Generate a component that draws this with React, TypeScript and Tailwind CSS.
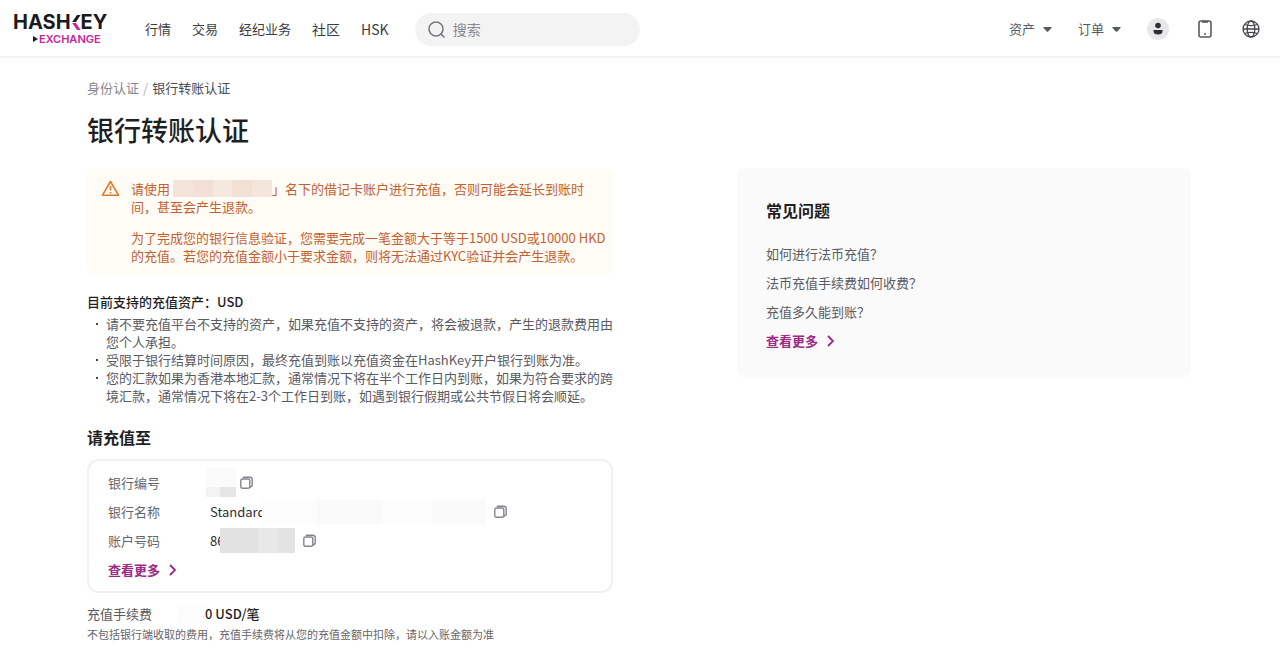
// App.tsx
import type { ReactNode } from "react";

const navLinks = [
  { label: "行情", large: false },
  { label: "交易", large: false },
  { label: "经纪业务", large: false },
  { label: "社区", large: true },
  { label: "HSK", large: true },
];

const questions = ["如何进行法币充值？", "法币充值手续费如何收费？", "充值多久能到账？"];

const notes = [
  "请不要充值平台不支持的资产，如果充值不支持的资产，将会被退款，产生的退款费用由您个人承担。",
  "受限于银行结算时间原因，最终充值到账以充值资金在HashKey开户银行到账为准。",
  "您的汇款如果为香港本地汇款，通常情况下将在半个工作日内到账，如果为符合要求的跨境汇款，通常情况下将在2-3个工作日到账，如遇到银行假期或公共节假日将会顺延。",
];

function Logo() {
  return (
    <a href="#" aria-label="HashKey Exchange" className="flex w-[95px] shrink-0 flex-col font-['Inter',sans-serif]">
      <span className="flex h-5 items-center text-xl leading-5 font-bold text-[#1b1b1f]">
        HASH
        <svg width="10" height="15" viewBox="0 0 10 15" aria-hidden="true" className="shrink-0">
          <path d="M6 0H9.6L5 7H1.2Z" fill="#1b1b1f" />
          <path d="M1.2 8H5L9.6 15H6Z" fill="#c8249b" />
        </svg>
        EY
      </span>
      <span className="flex h-[14px] items-center gap-px pl-5 text-[11px] leading-[14px] font-semibold text-[#c8249b]">
        <svg width="5" height="6" viewBox="0 0 5 6" aria-hidden="true" className="shrink-0">
          <path d="M0 0L5 3L0 6Z" fill="#1b1b1f" />
        </svg>
        EXCHANGE
      </span>
    </a>
  );
}

function MenuButton({ label }: { label: string }) {
  return (
    <button type="button" className="flex items-center gap-2 text-[13px] text-[#5a5a62]">
      {label}
      <svg width="9" height="5" viewBox="0 0 9 5" aria-hidden="true">
        <path d="M0.8 0H8.2Q9 0.2 8.5 0.9L5.2 4.6Q4.5 5.2 3.8 4.6L0.5 0.9Q0 0.2 0.8 0Z" fill="#5a5a62" />
      </svg>
    </button>
  );
}

function Header() {
  return (
    <header className="flex h-[58px] items-center border-b-2 border-[#f3f3f3] pt-0.5 pr-[19px] pl-[13px]">
      <Logo />
      <nav className="ml-[37px] flex shrink-0 items-center gap-[21px] text-[#3c3c43]">
        {navLinks.map((link) => (
          <a key={link.label} href="#" className={link.large ? "text-sm" : "text-[13px]"}>
            {link.label}
          </a>
        ))}
      </nav>
      <label className="ml-[26px] flex h-[33px] w-[225px] items-center gap-2 rounded-full bg-[#f3f3f3] px-[13px]">
        <svg width="17" height="17" viewBox="0 0 17 17" fill="none" stroke="#77777f" strokeWidth="1.6" aria-hidden="true" className="shrink-0">
          <circle cx="8" cy="8" r="7" />
          <path d="M13 13L16 16" strokeLinecap="round" />
        </svg>
        <input
          type="search"
          aria-label="搜索"
          placeholder="搜索"
          className="w-full min-w-0 bg-transparent text-sm outline-none placeholder:text-[#88888f]"
        />
      </label>
      <div className="ml-auto flex shrink-0 items-center gap-[26px]">
        <MenuButton label="资产" />
        <MenuButton label="订单" />
        <button type="button" aria-label="账户">
          <svg width="22" height="22" viewBox="0 0 22 22" className="block">
            <circle cx="11" cy="11" r="11" fill="#e8e8ea" />
            <circle cx="11" cy="7.5" r="2.8" fill="#2e2e33" />
            <path d="M6.5 12H15.5V13Q15.5 16.5 11 16.5Q6.5 16.5 6.5 13Z" fill="#2e2e33" />
          </svg>
        </button>
        <button type="button" aria-label="下载应用">
          <svg width="20" height="20" viewBox="0 0 20 20" fill="none" stroke="#5a5a62" strokeWidth="1.6" className="block">
            <rect x="4" y="2" width="12" height="16" rx="2" />
            <path d="M7 2.8H13" strokeWidth="2" />
            <circle cx="10" cy="15" r="1" fill="#5a5a62" stroke="none" />
          </svg>
        </button>
        <button type="button" aria-label="语言">
          <svg width="20" height="20" viewBox="0 0 20 20" fill="none" stroke="#45454c" strokeWidth="1.3" className="block">
            <circle cx="10" cy="10" r="8" />
            <ellipse cx="10" cy="10" rx="3.8" ry="8" />
            <path d="M2 10H18M3.6 5.5Q10 7.6 16.4 5.5M3.6 14.5Q10 12.4 16.4 14.5" />
          </svg>
        </button>
      </div>
    </header>
  );
}

function MoreLink() {
  return (
    <a href="#" className="flex h-[29px] items-center gap-2 text-[13px] font-bold text-[#9c2a86]">
      查看更多
      <svg width="9" height="12" viewBox="0 0 9 12" fill="none" stroke="#9c2a86" strokeWidth="1.8" aria-hidden="true">
        <path d="M2 1L7 6L2 11" />
      </svg>
    </a>
  );
}

function CopyButton({ label }: { label: string }) {
  return (
    <button type="button" aria-label={label} className="shrink-0">
      <svg width="13" height="13" viewBox="0 0 13 13" fill="none" stroke="#85858d" strokeWidth="1.4" className="block">
        <rect x="0.8" y="3" width="9" height="9.2" rx="1.6" />
        <path d="M2.8 1.2H9.8Q12.2 1.2 12.2 3.4V9.6L10 11.4" />
      </svg>
    </button>
  );
}

function BankRow({ label, children }: { label: string; children: ReactNode }) {
  return (
    <div className="flex h-[29px] items-center">
      <dt className="w-[98px] shrink-0 text-[#66666e]">{label}</dt>
      <dd className="flex min-w-0 items-center text-[#2e2e33]">{children}</dd>
    </div>
  );
}

function Warning() {
  return (
    <section className="flex gap-[11px] rounded-lg bg-[#fffcf5] pt-3 pb-[10px] pl-[14px] text-[13px] leading-[18px] text-[#c4602f]">
      <svg width="19" height="18" viewBox="0 0 19 18" fill="none" stroke="#e0792b" strokeWidth="1.6" aria-hidden="true" className="shrink-0">
        <path d="M9.5 1.5L17.5 15.2H1.5Z" strokeLinejoin="round" />
        <path d="M9.5 6V10.5M9.5 12V13.6" />
      </svg>
      <div className="flex flex-col gap-[13px]">
        <p>
          请使用{" "}
          <span className="inline-flex h-[17px] w-[99px] overflow-hidden align-top">
            <span className="grow bg-[#f4e4da]" />
            <span className="grow bg-[#f2dfd5]" />
            <span className="grow bg-[#f5e8df]" />
            <span className="grow bg-[#f2e0d5]" />
            <span className="grow bg-[#f4e6dc]" />
          </span>
          」名下的借记卡账户进行充值，否则可能会延长到账时
          <br />
          间，甚至会产生退款。
        </p>
        <p>
          为了完成您的银行信息验证，您需要完成一笔金额大于等于1500 USD或10000 HKD
          <br />
          的充值。若您的充值金额小于要求金额，则将无法通过KYC验证并会产生退款。
        </p>
      </div>
    </section>
  );
}

function BankCard() {
  return (
    <div className="mt-[10px] rounded-xl border-2 border-[#f1f1f2] px-[19px] py-[7px] text-[13px] leading-[18px]">
      <dl>
        <BankRow label="银行编号">
          <span className="mr-1 flex h-[29px] w-[30px] flex-col">
            <span className="grow bg-[#fbfbfb]" />
            <span className="flex h-[10px]">
              <span className="w-[14px] bg-[#f3f3f3]" />
              <span className="grow bg-[#e6e6e7]" />
            </span>
          </span>
          <CopyButton label="复制银行编号" />
        </BankRow>
        <BankRow label="银行名称">
          <span className="ml-1">Standard</span>
          {/* masked remainder sits over the last letter */}
          <span className="relative mr-2 -ml-1 flex h-6 w-[224px]">
            <span className="w-14 bg-[#fcfcfc]" />
            <span className="w-16 bg-[#f9f9f9]" />
            <span className="w-[50px] bg-[#fcfcfc]" />
            <span className="grow bg-[#fafafa]" />
          </span>
          <CopyButton label="复制银行名称" />
        </BankRow>
        <BankRow label="账户号码">
          <span className="ml-1">86</span>
          <span className="relative mr-2 -ml-1 flex h-[25px] w-[75px]">
            <span className="w-[38px] bg-[#e2e2e3]" />
            <span className="w-5 bg-[#e8e8e8]" />
            <span className="grow bg-[#e3e3e3]" />
          </span>
          <CopyButton label="复制账户号码" />
        </BankRow>
      </dl>
      <MoreLink />
    </div>
  );
}

export default function App() {
  return (
    <div className="bg-white font-['Noto_Sans_CJK_SC',sans-serif] text-[#1f1f23]">
      <Header />
      <main className="pt-[21px] pr-[89px] pb-6 pl-[87px]">
        <nav aria-label="面包屑" className="flex gap-1 text-[13px] leading-[18px]">
          <a href="#" className="text-[#85858d]">身份认证</a>
          <span className="text-[#b5b5bb]">/</span>
          <span className="text-[#4c4c54]">银行转账认证</span>
        </nav>
        <h1 className="mt-[15px] text-[27px] leading-9 font-medium">银行转账认证</h1>

        <div className="mt-5 grid grid-cols-[526fr_454fr] items-start gap-[124px]">
          <div>
            <Warning />
            <h2 className="mt-[18px] text-[13px] leading-[18px] font-medium">目前支持的充值资产：USD</h2>
            <ul className="mt-1 text-[13px] leading-[18px] text-[#5a5a62]">
              {notes.map((note) => (
                <li key={note} className="flex">
                  <span className="flex w-[19px] shrink-0 justify-center pt-2">
                    <span className="size-[2px] bg-[#45454c]" />
                  </span>
                  <span>{note}</span>
                </li>
              ))}
            </ul>

            <h2 className="mt-5 text-base leading-6 font-bold">请充值至</h2>
            <BankCard />
            <div className="mt-3 flex text-[13px] leading-[18px]">
              <span className="w-[90px] text-[#5a5a62]">充值手续费</span>
              <span className="w-7 bg-[#fcfcfc]" />
              <span className="font-medium">0 USD/笔</span>
            </div>
            <p className="mt-0.5 text-[11px] leading-[18px] text-[#66666e]">
              不包括银行端收取的费用，充值手续费将从您的充值金额中扣除，请以入账金额为准
            </p>
          </div>

          <aside className="rounded-lg bg-[#fafafa] px-[29px] pt-[30px] pb-[22px]">
            <h2 className="text-base leading-6 font-bold">常见问题</h2>
            <ul className="mt-[17px] text-[13px] text-[#5a5a62]">
              {questions.map((question) => (
                <li key={question}>
                  <a href="#" className="flex h-[29px] items-center">{question}</a>
                </li>
              ))}
            </ul>
            <MoreLink />
          </aside>
        </div>
      </main>
    </div>
  );
}
